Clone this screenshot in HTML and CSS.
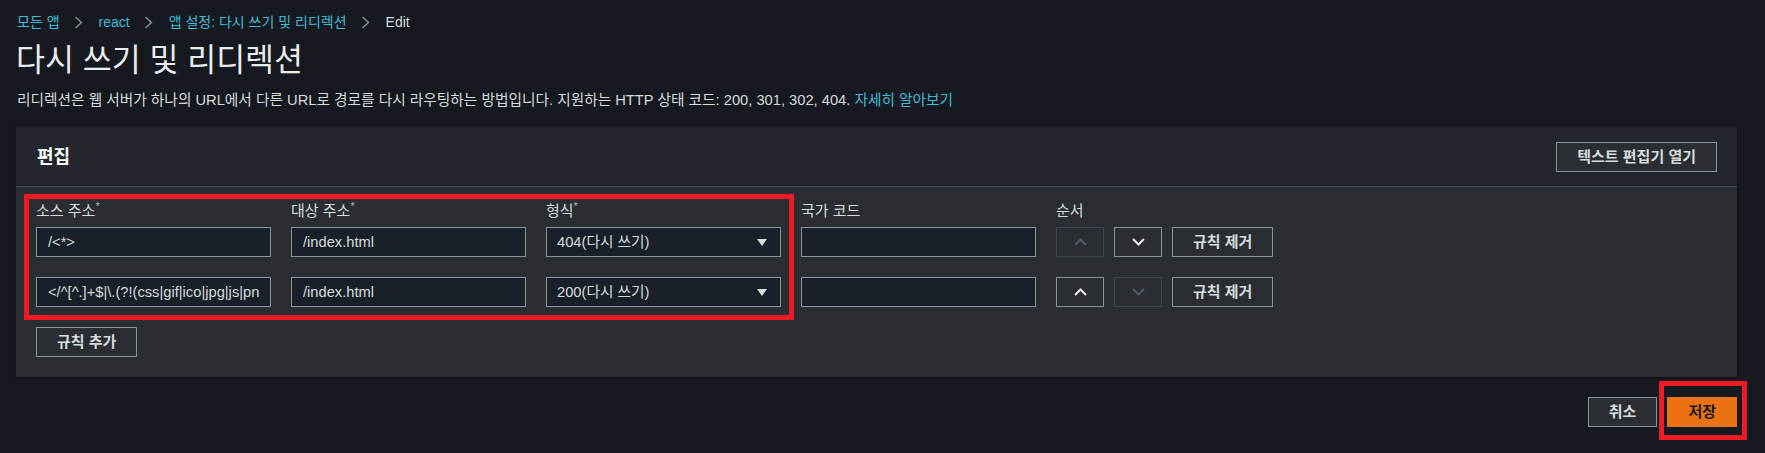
FILE: index.html
```html
<!DOCTYPE html>
<html>
<head>
  <meta charset="utf-8">
  <title>다시 쓰기 및 리디렉션</title>
  <link rel="stylesheet" href="styles.css">
</head>
<body>
<div class="page">

  <nav class="crumbs">
    <a href="#">모든 앱</a>
    <span class="sep"><svg width="9" height="13" viewBox="0 0 9 13"><path d="M1.5 1l6 5.5-6 5.5" fill="none" stroke="currentColor" stroke-width="1.4"/></svg></span>
    <a href="#">react</a>
    <span class="sep"><svg width="9" height="13" viewBox="0 0 9 13"><path d="M1.5 1l6 5.5-6 5.5" fill="none" stroke="currentColor" stroke-width="1.4"/></svg></span>
    <a href="#">앱 설정: 다시 쓰기 및 리디렉션</a>
    <span class="sep"><svg width="9" height="13" viewBox="0 0 9 13"><path d="M1.5 1l6 5.5-6 5.5" fill="none" stroke="currentColor" stroke-width="1.4"/></svg></span>
    <span class="current">Edit</span>
  </nav>

  <h1 class="title">다시 쓰기 및 리디렉션</h1>
  <p class="intro">리디렉션은 웹 서버가 하나의 URL에서 다른 URL로 경로를 다시 라우팅하는 방법입니다. 지원하는 HTTP 상태 코드: 200, 301, 302, 404. <a href="#">자세히 알아보기</a></p>

  <section class="panel">
    <div class="panel-head">
      <h2>편집</h2>
      <button class="btn">텍스트 편집기 열기</button>
    </div>

    <div class="panel-body">
      <div class="rule-head">
        <div class="field">소스 주소<span class="req">*</span></div>
        <div class="field">대상 주소<span class="req">*</span></div>
        <div class="field">형식<span class="req">*</span></div>
        <div class="field">국가 코드</div>
        <div class="field">순서</div>
      </div>

      <div class="rule-row">
        <input class="input" type="text" value="/<*>">
        <input class="input" type="text" value="/index.html">
        <div class="select"><span>404(다시 쓰기)</span><span class="caret"></span></div>
        <input class="input" type="text" value="">
        <div class="order">
          <button class="icon-btn" disabled><svg width="13" height="8" viewBox="0 0 13 8"><path d="M1 7l5.5-5.5 5.5 5.5" fill="none" stroke="currentColor" stroke-width="2"/></svg></button>
          <button class="icon-btn"><svg width="13" height="8" viewBox="0 0 13 8"><path d="M1 1l5.5 5.5 5.5-5.5" fill="none" stroke="currentColor" stroke-width="2"/></svg></button>
          <button class="btn">규칙 제거</button>
        </div>
      </div>

      <div class="rule-row">
        <input class="input" type="text" value="</^[^.]+$|\.(?!(css|gif|ico|jpg|js|png|txt|svg|woff|ttf|map|json)$)([^.]+$)/>">
        <input class="input" type="text" value="/index.html">
        <div class="select"><span>200(다시 쓰기)</span><span class="caret"></span></div>
        <input class="input" type="text" value="">
        <div class="order">
          <button class="icon-btn"><svg width="13" height="8" viewBox="0 0 13 8"><path d="M1 7l5.5-5.5 5.5 5.5" fill="none" stroke="currentColor" stroke-width="2"/></svg></button>
          <button class="icon-btn" disabled><svg width="13" height="8" viewBox="0 0 13 8"><path d="M1 1l5.5 5.5 5.5-5.5" fill="none" stroke="currentColor" stroke-width="2"/></svg></button>
          <button class="btn">규칙 제거</button>
        </div>
      </div>

      <button class="btn">규칙 추가</button>

      <div class="mark mark-rules"></div>
    </div>
  </section>

  <div class="actions">
    <button class="btn">취소</button>
    <div class="save-mark">
      <button class="btn primary">저장</button>
    </div>
  </div>

</div>
</body>
</html>
```

FILE: styles.css
```css
* {
  box-sizing: border-box;
}
body {
  margin: 0;
  background: #16191f;
  color: #d5dbdb;
  font-family: "Liberation Sans", "Noto Sans CJK KR", sans-serif;
  font-size: 14px;
  line-height: 20px;
}
.page {
  padding: 12px 28px 20px 16px;
}

.crumbs {
  display: flex;
  align-items: center;
  height: 20px;
  padding-left: 1px;
}
.crumbs a {
  color: #44b9d6;
  text-decoration: none;
}
.crumbs .sep {
  display: flex;
  margin: 0 16px 0 14px;
  color: #879596;
}
.crumbs .current {
  color: #d5dbdb;
}

.title {
  margin: 9px 0 0;
  font-size: 31.5px;
  line-height: 38px;
  font-weight: normal;
  color: #e9ebed;
}
.intro {
  margin: 11px 0 0;
  padding-left: 1px;
  font-size: 14.7px;
}
.intro a {
  color: #44b9d6;
  text-decoration: none;
}

.panel {
  margin-top: 17px;
  background: #2a2d32;
  box-shadow: 0 1px 2px rgba(0, 0, 0, 0.4);
}
.panel-head {
  height: 60px;
  display: flex;
  justify-content: space-between;
  align-items: center;
  padding: 0 20px 0 21px;
  background: #23272d;
  border-bottom: 1px solid #414750;
}
.panel-head h2 {
  margin: 0;
  font-size: 18px;
  font-weight: bold;
  color: #fafafa;
}
.panel-body {
  position: relative;
  padding: 14px 20px 20px;
}

.rule-head,
.rule-row {
  display: flex;
  gap: 20px;
}
.rule-head {
  margin-bottom: 6px;
  font-size: 15px;
}
.rule-row {
  margin-bottom: 20px;
}
.field {
  width: 235px;
}
.req {
  font-size: 11px;
  line-height: 10px;
  vertical-align: top;
  color: #aab7b8;
}

.input {
  width: 235px;
  height: 30px;
  margin: 0;
  padding: 0 11px;
  border: 1px solid #879596;
  border-radius: 0;
  background: #1a2029;
  color: #d5dbdb;
  font-family: inherit;
  font-size: 14.7px;
  outline: none;
}
.select {
  width: 235px;
  height: 30px;
  display: flex;
  justify-content: space-between;
  align-items: center;
  padding: 0 13px 0 10px;
  border: 1px solid #879596;
  background: #1a2029;
  font-size: 14.7px;
}
.caret {
  width: 0;
  height: 0;
  border-left: 5px solid transparent;
  border-right: 5px solid transparent;
  border-top: 7px solid #d5dbdb;
}

.order {
  display: flex;
  gap: 10px;
}
.icon-btn {
  width: 48px;
  height: 30px;
  padding: 0;
  display: flex;
  align-items: center;
  justify-content: center;
  border: 1px solid #879596;
  background: transparent;
  color: #eaeded;
}
.icon-btn:disabled {
  border-color: #414750;
  color: #545b64;
}

.btn {
  height: 30px;
  padding: 0 20px;
  border: 1px solid #879596;
  border-radius: 0;
  background: #2a2e33;
  color: #d5dbdb;
  font-family: inherit;
  font-size: 15px;
  font-weight: bold;
  line-height: 28px;
}
.btn.primary {
  display: block;
  background: #ec7211;
  border-color: #ec7211;
  color: #16191f;
}

.actions {
  display: flex;
  justify-content: flex-end;
  align-items: flex-start;
  gap: 10px;
  margin-top: 20px;
}

/* red highlight boxes drawn over the screenshot */
.mark {
  position: absolute;
  border: 5px solid #ed1c24;
  pointer-events: none;
}
.mark-rules {
  left: 8px;
  top: 7px;
  width: 770px;
  height: 126px;
}
.save-mark {
  border: 5px solid #ed1c24;
  padding: 11px 5px 8px 3px;
  margin: -16px -10px -13px -8px;
}
```
